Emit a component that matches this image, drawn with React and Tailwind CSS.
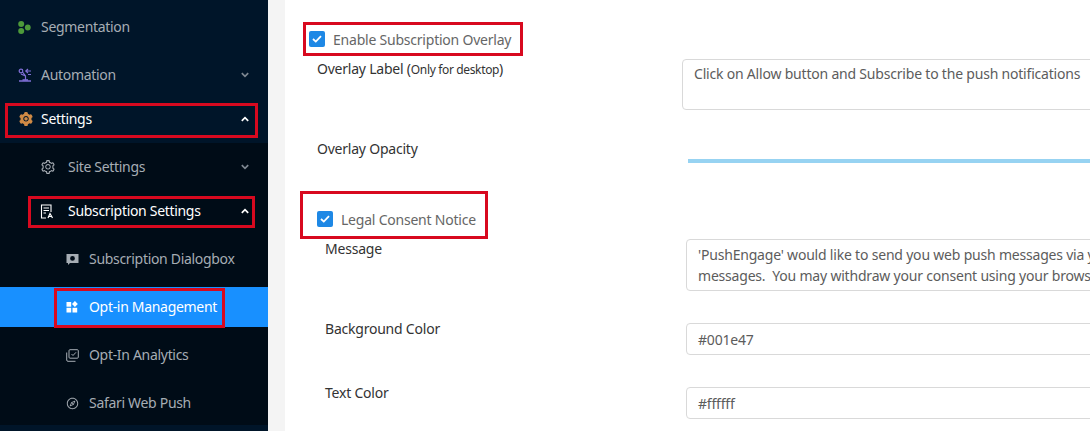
import React from "react";
import { AiFillSetting, AiOutlineSetting, AiOutlineCompass } from "react-icons/ai";

const Chevron = ({ up, bright }) => (
  <svg width="8" height="6" viewBox="0 0 8 6" className="absolute right-[19px] top-[17px]" fill="none" stroke={bright ? "#ffffff" : "#7d8791"} strokeWidth="1.7">
    <path d={up ? "M0.8 4.8 L4 1.6 L7.2 4.8" : "M0.8 1.2 L4 4.4 L7.2 1.2"} />
  </svg>
);

const SegIcon = () => (
  <svg width="13" height="13" viewBox="0 0 13 13" fill="#4d9a3a">
    <circle cx="3.2" cy="3.1" r="3" /><circle cx="3.2" cy="9.9" r="3" /><circle cx="9.8" cy="6.5" r="2.9" />
  </svg>
);
const AutoIcon = () => (
  <svg width="14" height="14" viewBox="0 0 14 14" fill="none" stroke="#7f6fd6" strokeWidth="1.2">
    <circle cx="3" cy="3" r="1.8" /><path d="M4.5 4 L7.5 8 V12 M10 1 L7.8 3 L10 5 M8 3 H13 M10 6.5 H13 M7.5 8 L3 6" /><path d="M1 13 H13" strokeWidth="1.5" />
    <path d="M4.5 12 H10" strokeWidth="1.6" />
  </svg>
);
const SubSetIcon = () => (
  <svg width="14" height="15" viewBox="0 0 14 15" fill="none" stroke="#ffffff" strokeWidth="1.1">
    <path d="M6 14 H1.5 V1 H11 V8" /><path d="M3.5 4 H9 M3.5 6.5 H9 M3.5 9 H6" />
    <path d="M8 14 L10 9.5 L12.5 14 M9 12.5 H11.8" strokeWidth="1.2" />
  </svg>
);
const DialogIcon = () => (
  <svg width="13" height="13" viewBox="0 0 13 13">
    <path fillRule="evenodd" fill="#a6adb4" d="M0.5 1 H12.5 V10 H4 L2 12 V10 H0.5 Z M6.5 3 A2.4 2.4 0 1 0 6.5 7.8 A2.4 2.4 0 1 0 6.5 3 Z" />
  </svg>
);
const OptIcon = () => (
  <svg width="12" height="12" viewBox="0 0 12 12" fill="#ffffff">
    <rect x="0.5" y="1" width="4.7" height="4.7" /><rect x="0.5" y="6.8" width="4.7" height="4.7" /><rect x="6.5" y="6.8" width="4.7" height="4.7" />
    <path d="M8.9 0 L11.8 3 L8.9 5.9 L6 3 Z" />
  </svg>
);
const AnalyticsIcon = () => (
  <svg width="13" height="13" viewBox="0 0 13 13" fill="none" stroke="#a6adb4" strokeWidth="1">
    <rect x="3" y="0.7" width="9.3" height="8.5" rx="1" />
    <path d="M0.7 3.5 V11 A1.3 1.3 0 0 0 2 12.3 H9.5" />
    <path d="M5.5 5 L7 6.5 L10 3.3" />
  </svg>
);

const Row = ({ icon, label, indent, bright, active, chevron, up, className = "" }) => (
  <div className={`relative flex h-10 items-center text-[14px] tracking-[-0.31px] ${active ? "bg-[#1890ff] text-white" : bright ? "text-white" : "text-[#a6adb4]"} ${className}`} style={{ paddingLeft: indent }}>
    <span className="flex w-[23px] shrink-0 items-center">{icon}</span>
    <span className={`mb-[2px] ${indent === 40 ? "ml-[5px]" : ""}`}>{label}</span>
    {chevron && <Chevron up={up} bright={bright} />}
  </div>
);

const Annot = ({ className }) => (
  <div className={`pointer-events-none absolute border-[3px] border-[#d8091f] ${className}`} />
);

const Check = () => (
  <span className="flex h-4 w-4 shrink-0 items-center justify-center rounded-[2px] bg-[#1e88e5]">
    <svg width="10" height="8" viewBox="0 0 10 8" fill="none" stroke="#fff" strokeWidth="1.8"><path d="M1 4 L3.8 6.6 L9 1.2" /></svg>
  </span>
);

const Box = ({ className, children }) => (
  <div className={`w-[600px] shrink-0 rounded-[4px] border border-[#d9d9d9] bg-white pl-[11px] text-[14px] leading-[21px] text-[#5c5c5c] whitespace-nowrap tracking-[-0.2px] ${className}`}>{children}</div>
);

export default function App() {
  return (
    <div className="relative flex h-[431px] w-[1090px] overflow-hidden bg-white text-[14px] [font-family:'Noto_Sans',sans-serif]">
      <aside className="flex h-full w-[268px] shrink-0 flex-col bg-[#001529] pt-[7px]">
        <Row icon={<SegIcon />} label="Segmentation" indent={18} className="mb-2" />
        <Row icon={<AutoIcon />} label="Automation" indent={18} chevron className="mb-1" />
        <Row icon={<span className="text-[#d08a45]"><AiFillSetting size={16} /></span>} label="Settings" indent={18} bright chevron up className="mb-1" />
        <div className="h-[282px] bg-[#000c17] pt-1">
          <Row icon={<AiOutlineSetting size={16} color="#a6adb4" />} label="Site Settings" indent={40} chevron className="mb-1" />
          <Row icon={<SubSetIcon />} label="Subscription Settings" indent={40} bright chevron up className="mb-2" />
          <Row icon={<DialogIcon />} label="Subscription Dialogbox" indent={66} className="mb-2" />
          <Row icon={<OptIcon />} label="Opt-in Management" indent={66} active className="mb-2" />
          <Row icon={<AnalyticsIcon />} label="Opt-In Analytics" indent={66} className="mb-2" />
          <Row icon={<AiOutlineCompass size={13} color="#a6adb4" />} label="Safari Web Push" indent={66} />
        </div>
      </aside>
      <div className="w-[17px] shrink-0 bg-[#f4f4f4]" />
      <main className="min-w-0 flex-1 pt-[29px] tracking-[-0.22px]">
        <div className="ml-6 flex h-5 items-center gap-2 text-[#666666]"><Check /><span>Enable Subscription Overlay</span></div>
        <div className="ml-8 mt-[10px] flex">
          <div className="w-[365px] shrink-0 leading-5 text-[#333333]">Overlay Label (<span className="text-[12px] tracking-[-0.35px]">Only for desktop</span>)</div>
          <Box className="h-[51px] pt-[3px]">Click on Allow button and Subscribe to the push notifications</Box>
        </div>
        <div className="ml-8 mt-[28px] flex h-5 items-center">
          <div className="w-[371px] shrink-0 text-[#333333]">Overlay Opacity</div>
          <div className="mt-[26px] h-1 w-[500px] shrink-0 bg-[#97d3f2]" />
        </div>
        <div className="ml-[32px] mt-[51px] flex h-5 items-center gap-2 text-[#666666]"><Check /><span>Legal Consent Notice</span></div>
        <div className="ml-10 mt-[10px] flex">
          <div className="w-[361px] shrink-0 leading-5 text-[#333333]">Message</div>
          <Box className="h-[52px] pt-[4px]">'PushEngage' would like to send you web push messages via your<br />messages.&nbsp; You may withdraw your consent using your browser</Box>
        </div>
        <div className="ml-10 mt-8 flex">
          <div className="-mt-1 w-[361px] shrink-0 leading-5 text-[#333333]">Background Color</div>
          <Box className="flex h-8 items-center">#001e47</Box>
        </div>
        <div className="ml-10 mt-8 flex">
          <div className="-mt-1 w-[361px] shrink-0 leading-5 text-[#333333]">Text Color</div>
          <Box className="flex h-8 items-center">#ffffff</Box>
        </div>
      </main>
      <Annot className="left-[5px] top-[103px] h-[35px] w-[253px]" />
      <Annot className="left-[28px] top-[196px] h-[32px] w-[227px]" />
      <Annot className="left-[54px] top-[288px] h-[40px] w-[171px]" />
      <Annot className="left-[303px] top-[22px] h-[34px] w-[220px]" />
      <Annot className="left-[300px] top-[191px] h-[48px] w-[188px]" />
    </div>
  );
}
